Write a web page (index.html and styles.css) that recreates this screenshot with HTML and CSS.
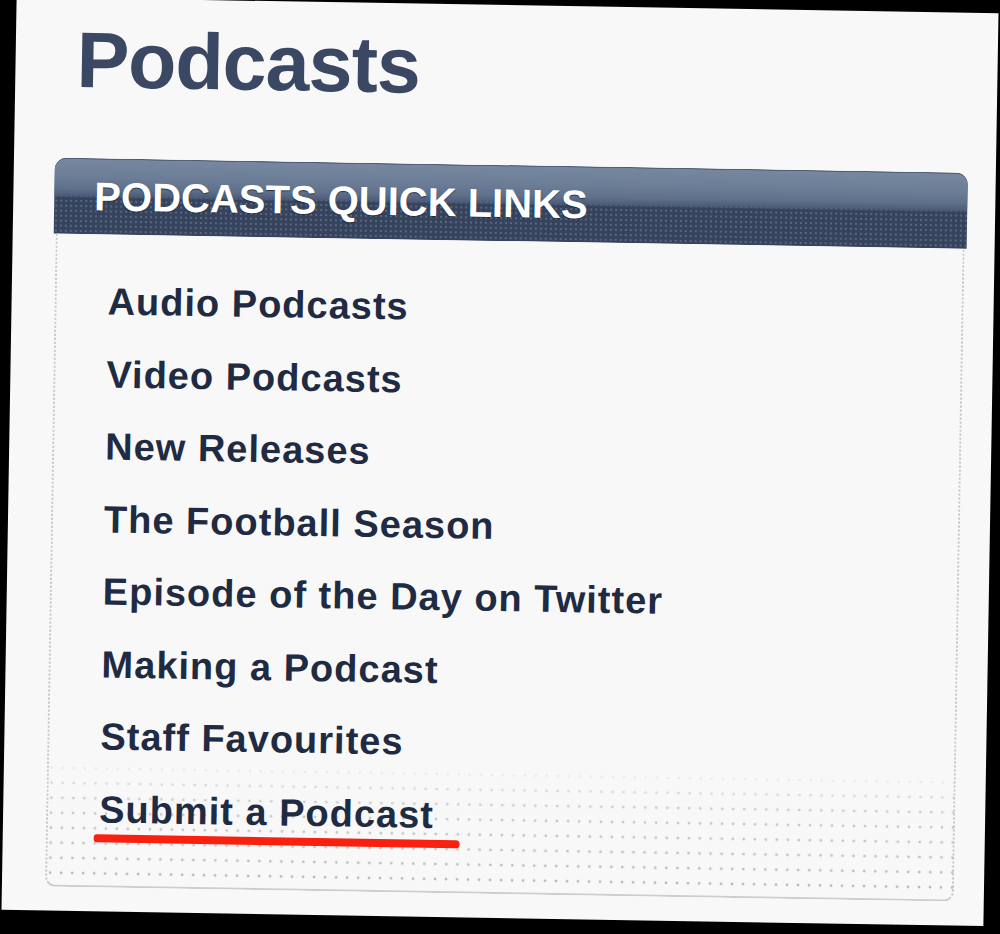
FILE: index.html
```html
<!DOCTYPE html>
<html lang="en">
<head>
<meta charset="utf-8">
<title>Podcasts</title>
<link rel="stylesheet" href="styles.css">
</head>
<body>
<div class="page">
  <h1 class="title">Podcasts</h1>
  <section class="quick">
    <h2 class="quick-head">PODCASTS QUICK LINKS</h2>
    <ul class="quick-list">
      <li class="quick-item">Audio Podcasts</li>
      <li class="quick-item">Video Podcasts</li>
      <li class="quick-item">New Releases</li>
      <li class="quick-item">The Football Season</li>
      <li class="quick-item">Episode of the Day on Twitter</li>
      <li class="quick-item">Making a Podcast</li>
      <li class="quick-item">Staff Favourites</li>
      <li class="quick-item is-marked">Submit a Podcast<span class="marker"></span></li>
    </ul>
  </section>
</div>
</body>
</html>
```

FILE: styles.css
```css
html, body {
  margin: 0;
  padding: 0;
}

body {
  background: #000;
  width: 1000px;
  height: 934px;
  overflow: hidden;
  font-family: "Liberation Sans", Arial, Helvetica, sans-serif;
}

.page {
  box-sizing: border-box;
  width: 982px;
  height: 913px;
  margin: 5px 0 0 9px;
  background: #f8f8f8;
  transform: rotate(0.95deg);
  transform-origin: 50% 50%;
  padding: 22px 0 0 41px;
}

.title {
  margin: 0 0 59px 20px;
  font-size: 79px;
  line-height: 79px;
  font-weight: bold;
  color: #3a4864;
  letter-spacing: -1px;
}

.quick {
  width: 913px;
}

.quick-head {
  margin: 0;
  box-sizing: border-box;
  height: 76px;
  line-height: 75px;
  padding-left: 40px;
  border-top: 1px solid #4c5b76;
  border-radius: 12px 12px 0 0;
  font-size: 40px;
  font-weight: bold;
  color: #ffffff;
  text-shadow: 0 1px 1px rgba(20, 30, 50, 0.7);
  background:
    linear-gradient(to bottom, #76879f 0px, #6c7d97 18px, #5f708b 30px, #4e5e7b 36px, rgba(58, 71, 98, 0) 39px),
    radial-gradient(circle at 2px 2px, #58677f 0.9px, rgba(88, 103, 127, 0) 1.4px) 0 0 / 5px 5px,
    #36435d;
}

.quick-list {
  list-style: none;
  margin: 0 2px;
  padding: 31px 0 40px 51px;
  border-left: 2px dotted #c4c4c4;
  border-right: 2px dotted #c4c4c4;
  border-bottom: 2px solid #cdcdcd;
  border-radius: 0 0 10px 10px;
  background:
    linear-gradient(to bottom, #f8f8f8 0, #f8f8f8 calc(100% - 130px), rgba(248, 248, 248, 0.35) calc(100% - 90px), rgba(248, 248, 248, 0) 100%),
    radial-gradient(circle at 3px 3px, #b6b6b6 1.2px, rgba(182, 182, 182, 0) 1.7px) 0 100% / 11px 15px,
    #f8f8f8;
}

.quick-item {
  position: relative;
  height: 72.5px;
  line-height: 72.5px;
  font-size: 38px;
  font-weight: bold;
  letter-spacing: 1px;
  color: #1f2b42;
  white-space: nowrap;
}

.marker {
  position: absolute;
  left: -5px;
  top: 61px;
  width: 366px;
  height: 8px;
  background: #f8200f;
  border-radius: 4px 5px 5px 4px;
}
```
